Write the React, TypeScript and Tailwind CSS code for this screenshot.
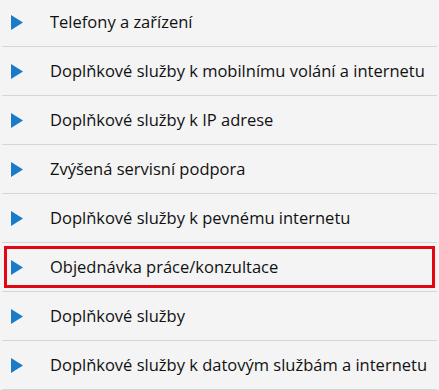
const items = [
  'Telefony a zařízení',
  'Doplňkové služby k mobilnímu volání a internetu',
  'Doplňkové služby k IP adrese',
  'Zvýšená servisní podpora',
  'Doplňkové služby k pevnému internetu',
  'Objednávka práce/konzultace',
  'Doplňkové služby',
  'Doplňkové služby k datovým službám a internetu',
]

const ACTIVE = 5

export default function App() {
  return (
    <div className="h-[390px] overflow-hidden bg-[#f4f4f4] font-['Open_Sans',sans-serif]">
      <ul className="-mt-[2px] px-[2px]">
        {items.map((label, i) => (
          <li key={label} className="h-[49px] border-b border-[#d6d6d6] px-[2px] py-[3px]">
            <div
              className={`flex h-full items-center border-[3px] pl-[4px] ${
                i === ACTIVE ? 'border-[#e30613]' : 'border-transparent'
              }`}
            >
              <svg width="12" height="15" viewBox="0 0 12 15" className="shrink-0">
                <polygon points="0,0 12,7.5 0,15" fill="#1a7cc7" />
              </svg>
              <span className="ml-[27px] text-[16.5px] text-[#111]">{label}</span>
            </div>
          </li>
        ))}
      </ul>
    </div>
  )
}
